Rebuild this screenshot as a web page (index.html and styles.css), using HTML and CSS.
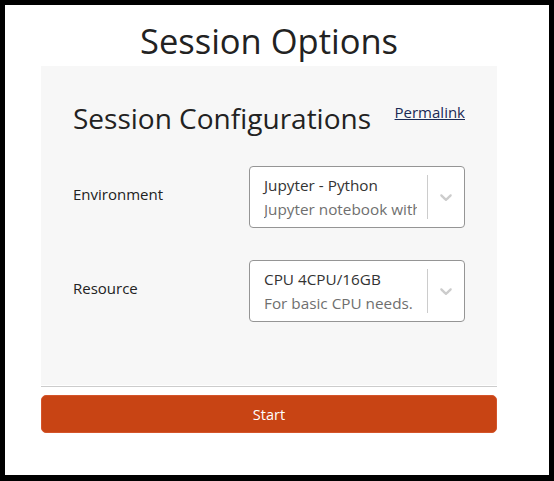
FILE: index.html
```html
<!DOCTYPE html>
<html>
<head>
<meta charset="utf-8">
<link rel="stylesheet" href="styles.css">
</head>
<body>
<div class="frame">
  <div class="wrap">
    <h1 class="title">Session Options</h1>
    <div class="panel">
      <div class="head">
        <h2 class="subtitle">Session Configurations</h2>
        <a class="permalink" href="#">Permalink</a>
      </div>
      <div class="row">
        <div class="label">Environment</div>
        <div class="select">
          <div class="value">
            <div class="main">Jupyter - Python</div>
            <div class="desc">Jupyter notebook with Python</div>
          </div>
          <div class="sep"></div>
          <div class="ind">
            <svg viewBox="0 0 20 20" width="20" height="20"><path d="M4.516 7.548c0.436-0.446 1.043-0.481 1.576 0l3.908 3.747 3.908-3.747c0.533-0.481 1.141-0.446 1.574 0 0.436 0.445 0.408 1.197 0 1.615-0.406 0.418-4.695 4.502-4.695 4.502-0.217 0.223-0.502 0.335-0.787 0.335s-0.57-0.112-0.789-0.335c0 0-4.287-4.084-4.695-4.502s-0.436-1.170 0-1.615z"/></svg>
          </div>
        </div>
      </div>
      <div class="row">
        <div class="label">Resource</div>
        <div class="select">
          <div class="value">
            <div class="main">CPU 4CPU/16GB</div>
            <div class="desc">For basic CPU needs.</div>
          </div>
          <div class="sep"></div>
          <div class="ind">
            <svg viewBox="0 0 20 20" width="20" height="20"><path d="M4.516 7.548c0.436-0.446 1.043-0.481 1.576 0l3.908 3.747 3.908-3.747c0.533-0.481 1.141-0.446 1.574 0 0.436 0.445 0.408 1.197 0 1.615-0.406 0.418-4.695 4.502-4.695 4.502-0.217 0.223-0.502 0.335-0.787 0.335s-0.57-0.112-0.789-0.335c0 0-4.287-4.084-4.695-4.502s-0.436-1.170 0-1.615z"/></svg>
          </div>
        </div>
      </div>
    </div>
    <div class="rule"></div>
    <button class="start">Start</button>
  </div>
</div>
</body>
</html>
```
FILE: styles.css
```css
html, body {
  margin: 0;
  padding: 0;
  background: #000;
}
body {
  font-family: "Open Sans", "Noto Sans", sans-serif;
  color: #222;
}
.frame {
  box-sizing: border-box;
  width: 554px;
  height: 481px;
  border-style: solid;
  border-color: #000;
  border-width: 5px 5px 6px 5px;
  background: #fff;
}
.wrap {
  width: 456px;
  margin-left: 36px;
}
.title {
  margin: 0;
  padding-top: 12px;
  height: 49px;
  font-size: 34.5px;
  line-height: 48px;
  font-weight: 400;
  text-align: center;
  color: #222;
}
.panel {
  background: #f7f7f7;
  height: 319px;
  box-sizing: border-box;
  padding: 30px 32px 0 32px;
}
.head {
  display: flex;
  justify-content: space-between;
  align-items: flex-start;
  height: 70px;
}
.subtitle {
  margin: 0;
  font-size: 28px;
  font-weight: 400;
  line-height: 44px;
  color: #222;
}
.permalink {
  font-size: 15px;
  line-height: 33px;
  color: #1a2a55;
  text-decoration: underline;
}
.row {
  display: grid;
  grid-template-columns: 176px 216px;
  align-items: center;
  margin-bottom: 32px;
}
.label {
  font-size: 15px;
  padding-bottom: 7px;
}
.select {
  box-sizing: border-box;
  height: 62px;
  border: 1px solid #959595;
  border-radius: 4px;
  background: #fff;
  display: flex;
  align-items: center;
}
.value {
  flex: 1;
  min-width: 0;
  padding-left: 14px;
  overflow: hidden;
  white-space: nowrap;
  font-size: 15.3px;
  line-height: 24px;
}
.main {
  color: #333;
}
.desc {
  color: #6f6f6f;
  overflow: hidden;
}
.sep {
  align-self: stretch;
  width: 1px;
  margin: 8px 0 8px 10px;
  background: #cccccc;
}
.ind {
  width: 36px;
  display: flex;
  justify-content: center;
  align-items: center;
}
.ind svg {
  fill: #cccccc;
}
.rule {
  height: 1px;
  background: #cccccc;
  margin-top: 1px;
}
.start {
  display: block;
  width: 456px;
  height: 38px;
  margin-top: 8px;
  border: 1px solid #d4542a;
  border-radius: 5px;
  background: #c84414;
  color: #fff;
  font-family: "Open Sans", "Noto Sans", sans-serif;
  font-size: 14.5px;
}
```
